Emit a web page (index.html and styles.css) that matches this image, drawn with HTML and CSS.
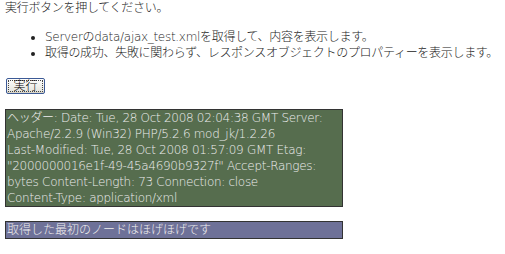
FILE: index.html
```html
<!DOCTYPE html>
<html lang="ja">
<head>
<meta charset="utf-8">
<link rel="stylesheet" href="styles.css">
</head>
<body>
<p class="intro">実行ボタンを押してください。</p>
<ul class="notes">
<li>Serverのdata/ajax_test.xmlを取得して、内容を表示します。</li>
<li>取得の成功、失敗に関わらず、レスポンスオブジェクトのプロパティーを表示します。</li>
</ul>
<div class="actions"><button class="run" type="button"><span class="run-label">実行</span></button></div>
<div class="headers">ヘッダー: Date: Tue, 28 Oct 2008 02:04:38 GMT Server: Apache/2.2.9 (Win32) PHP/5.2.6 mod_jk/1.2.26 <span class="nb">Last-Modified:</span> Tue, 28 Oct 2008 01:57:09 GMT Etag: <span class="nb">"2000000016e1f-49-45a4690b9327f"</span> <span class="nb">Accept-Ranges:</span> bytes <span class="nb">Content-Length:</span> 73 Connection: close <span class="nb">Content-Type:</span> application/xml</div>
<div class="node">取得した最初のノードはほげほげです</div>
</body>
</html>
```
FILE: styles.css
```css
html, body {
  background: #ffffff;
}
body {
  margin: 0 5px;
  font-family: "DejaVu Sans", "Noto Sans CJK JP", sans-serif;
  font-size: 12px;
  font-weight: 300;
  line-height: 16px;
  color: #222222;
  letter-spacing: -0.3px;
}
.intro {
  margin: 0;
}
.notes {
  margin: 13px 0 0;
  padding-left: 40px;
}
.actions {
  margin-top: 17px;
  padding-left: 1px;
  display: flex;
}
.run {
  height: 16px;
  width: 39px;
  padding: 1px;
  margin: 0;
  border: 1px solid #3c5a96;
  border-radius: 2px;
  background: linear-gradient(#ffffff, #e6e6e0 85%, #d6d0c0);
  font-family: inherit;
  font-weight: 300;
  font-size: 12px;
  line-height: 12px;
  color: #000000;
  display: flex;
}
.run-label {
  flex: 1;
  border: 1px dotted #444444;
  display: flex;
  align-items: center;
  justify-content: center;
}
.headers {
  margin-top: 15px;
  width: 331px;
  padding: 0 4px 0 1px;
  border: 1px solid #333333;
  background: #566d4e;
  color: #eeeeee;
  letter-spacing: -0.3px;
}
.nb {
  white-space: nowrap;
}
.node {
  margin-top: 14px;
  width: 335px;
  padding: 0 0 0 1px;
  border: 1px solid #333333;
  background: #6e7198;
  color: #eeeeee;
  letter-spacing: 0;
}
```
